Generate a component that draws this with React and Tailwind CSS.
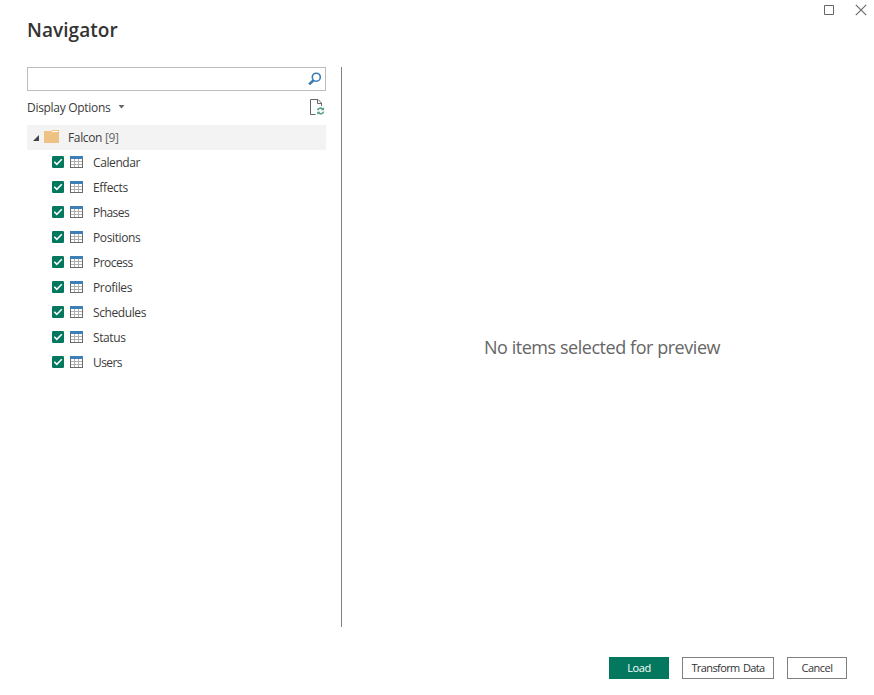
import React from "react";

const tables = [
  { name: "Calendar", tracking: "tracking-[-0.4px]" },
  { name: "Effects", tracking: "tracking-[-0.35px]" },
  { name: "Phases", tracking: "tracking-[-0.55px]" },
  { name: "Positions", tracking: "tracking-[-0.37px]" },
  { name: "Process", tracking: "tracking-[-0.5px]" },
  { name: "Profiles", tracking: "tracking-[-0.35px]" },
  { name: "Schedules", tracking: "tracking-[-0.4px]" },
  { name: "Status", tracking: "tracking-[-0.4px]" },
  { name: "Users", tracking: "tracking-[-0.6px]" },
];

function SearchIcon() {
  return (
    <svg width="14" height="14" viewBox="0 0 14 14" fill="none" stroke="#3a7ab3">
      <circle cx="8.3" cy="5.2" r="4" strokeWidth="1.6" />
      <path d="M5.6 8.2L1.1 12.4" strokeWidth="2.6" />
    </svg>
  );
}

function RefreshPageIcon() {
  return (
    <svg width="15" height="17" viewBox="0 0 15 17" fill="none">
      <path d="M5.5 15.5H.5V.5H8L11.5 4V7" stroke="#666" />
      <path d="M7.5 .5V4.5H12" stroke="#666" />
      <path d="M7.6 11.2C8.2 9 11.2 8.4 12.6 10.2M13.6 12.6C13 15 10 15.6 8.6 13.8" stroke="#4f9f7c" strokeWidth="1.5" />
      <path d="M14 8.3V11.3H11zM7.2 15.8V12.7H10.3z" fill="#4f9f7c" />
    </svg>
  );
}

function FolderIcon() {
  return (
    <svg width="15" height="13" viewBox="0 0 15 13">
      <path d="M0 1H7.5L8.5 0H15V13H0z" fill="#eec184" />
      <path d="M8 2.3L9 1.5H14" fill="none" stroke="#fff" strokeWidth="1" />
    </svg>
  );
}

function Checkbox() {
  return (
    <svg width="12" height="12" viewBox="0 0 12 12">
      <rect width="12" height="12" rx="1.3" fill="#03785f" />
      <path d="M2.3 5.8L4.8 8.3L9.8 3.3" fill="none" stroke="#fff" strokeWidth="1.6" />
    </svg>
  );
}

function TableIcon() {
  return (
    <svg width="13" height="12" viewBox="0 0 13 12" shapeRendering="crispEdges">
      <rect width="13" height="12" fill="#fff" />
      <path d="M1 5.5H12M1 8.5H12M4.5 3V11M8.5 3V11" stroke="#b0b0b0" />
      <path d="M.5 3V11.5H12.5V3" fill="none" stroke="#6a6a6a" />
      <rect width="13" height="3" fill="#3f7fb7" />
    </svg>
  );
}

export default function App() {
  return (
    <div className="flex h-[695px] w-[874px] flex-col overflow-hidden bg-white font-['Open_Sans','Noto_Sans',sans-serif] text-[12px] text-[#3b3b3b]">
      <header className="flex h-[67px] items-start justify-between pl-[27px]">
        <h1 className="mt-[16px] text-[19px] leading-[28px] font-semibold tracking-[0.05px] text-[#333]">Navigator</h1>
        <div className="flex gap-[20px] pt-[4px] pr-[7px]">
          <svg width="12" height="12" viewBox="0 0 12 12" fill="none" stroke="#666">
            <path d="M1.5 1.5H10.5V10.5H1.5z" />
          </svg>
          <svg width="12" height="12" viewBox="0 0 12 12" fill="none" stroke="#666" strokeWidth="1.1">
            <path d="M.8 .8L11.2 11.2M11.2 .8L.8 11.2" />
          </svg>
        </div>
      </header>

      <main className="flex h-[560px] pl-[27px]">
        <section className="w-[299px]">
          <div className="flex h-[24px] items-center justify-end border border-[#bcbcbc] pr-[3px]">
            <SearchIcon />
          </div>
          <div className="flex h-[34px] items-center justify-between">
            <div className="flex items-center">
              <span className="w-[91px] tracking-[-0.3px]">Display Options</span>
              <svg width="7" height="4" viewBox="0 0 7 4" className="-mt-[3px]">
                <path d="M.5 0H6.5L3.5 3.5z" fill="#666" />
              </svg>
            </div>
            <div className="mr-px -mt-[2px]">
              <RefreshPageIcon />
            </div>
          </div>
          <div className="flex h-[25px] items-center bg-[#f3f3f3] pl-[6px]">
            <svg width="6" height="6" viewBox="0 0 6 6" className="mt-[1px]">
              <path d="M6 0V6H0z" fill="#444" />
            </svg>
            <div className="ml-[5px] -mt-[2px]">
              <FolderIcon />
            </div>
            <span className="ml-[9px] tracking-[-0.35px]">
              Falcon <span className="text-[#666]">[9]</span>
            </span>
          </div>
          <ul>
            {tables.map((t) => (
              <li key={t.name} className="flex h-[25px] items-center pl-[25px]">
                <div className="-mt-px">
                  <Checkbox />
                </div>
                <div className="-mt-px ml-[6px]">
                  <TableIcon />
                </div>
                <span className={`ml-[10px] pt-px ${t.tracking}`}>{t.name}</span>
              </li>
            ))}
          </ul>
        </section>
        <div className="ml-[15px] w-px bg-[#808080]" />
        <section className="flex flex-1 items-center justify-center pr-[12px]">
          <p className="text-[18px] tracking-[-0.45px] whitespace-nowrap text-[#666]">No items selected for preview</p>
        </section>
      </main>

      <footer className="flex flex-1 items-start justify-end gap-[13px] pt-[30px] pr-[27px] text-[11px] text-[#333]">
        <button className="h-[22px] w-[60px] bg-[#03785f] tracking-[-0.45px] text-white">Load</button>
        <button className="h-[22px] w-[92px] border border-[#808080] tracking-[-0.6px] [word-spacing:1px] whitespace-nowrap">Transform Data</button>
        <button className="h-[22px] w-[60px] border border-[#808080] tracking-[-0.5px]">Cancel</button>
      </footer>
    </div>
  );
}
